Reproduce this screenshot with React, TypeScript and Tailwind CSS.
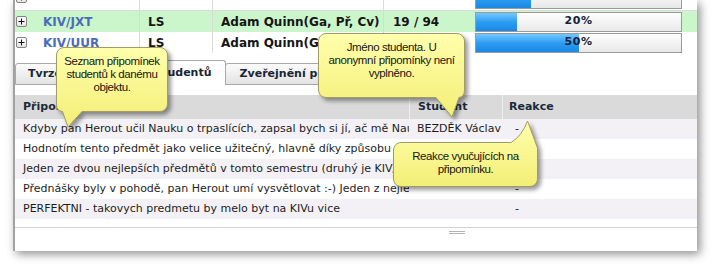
import React from "react";

function Expander({ className = "" }: { className?: string }) {
  return (
    <div
      className={
        "w-[11px] h-[11px] shrink-0 border border-[#858585] rounded-[2px] bg-linear-to-b from-white to-[#e4e4e4] flex items-center justify-center " +
        className
      }
    >
      <svg width="7" height="7" viewBox="0 0 7 7">
        <path d="M0.5 3.5H6.5M3.5 0.5V6.5" stroke="#111" strokeWidth="1" />
      </svg>
    </div>
  );
}

function Bar({ pct, label = true }: { pct: number; label?: boolean }) {
  return (
    <div className="relative w-[207px] h-[20px] border border-[#9a9a9a] bg-linear-to-b from-[#fefefe] to-[#e8e8e8]">
      <div
        className="absolute left-0 top-0 bottom-0 bg-linear-to-b from-[#72c8ff] via-[#2c9cf2] to-[#1a88e4]"
        style={{ width: `${pct}%` }}
      />
      {label && (
        <span className="relative flex h-full items-center justify-center text-[11px] font-bold tracking-[0.6px] text-[#142238]">
          {pct}%
        </span>
      )}
    </div>
  );
}

function TopRow({
  green,
  code,
  typ,
  name,
  count,
  pct,
}: {
  green?: boolean;
  code: string;
  typ: string;
  name: string;
  count: string;
  pct: number;
}) {
  return (
    <div className={"flex h-[21px] items-stretch " + (green ? "bg-[#cbf5cb]" : "bg-white")}>
      <div className="w-[124px] flex items-center pl-[1px]">
        <Expander />
        <span className="ml-[16px] text-[12px] font-bold text-[#4b6cb7]">{code}</span>
      </div>
      <div className="w-[73px] flex items-center border-l border-[#dadada] pl-[8px] text-[12px] font-bold text-[#161616]">
        {typ}
      </div>
      <div className="w-[171px] flex items-center border-l border-[#dadada] pl-[8px] text-[12px] font-bold text-[#161616] whitespace-nowrap">
        {name}
      </div>
      <div className="w-[87px] flex items-center border-l border-[#dadada] pl-[9px] text-[12px] font-bold text-[#161616] whitespace-nowrap">
        {count}
      </div>
      <div className="flex items-center pl-[5px]">
        <Bar pct={pct} />
      </div>
    </div>
  );
}

const rows = [
  {
    text: "Kdyby pan Herout učil Nauku o trpaslících, zapsal bych si jí, ač mě Nauka o trpaslících nezajímá.",
    student: "BEZDĚK Václav",
    reakce: "-",
  },
  {
    text: "Hodnotím tento předmět jako velice užitečný, hlavně díky způsobu výuky.",
    student: "",
    reakce: "-",
  },
  {
    text: "Jeden ze dvou nejlepších předmětů v tomto semestru (druhý je KIV/UUR).",
    student: "",
    reakce: "-",
  },
  {
    text: "Přednášky byly v pohodě, pan Herout umí vysvětlovat :-) Jeden z nejlepších předmětů.",
    student: "",
    reakce: "-",
  },
  {
    text: "PERFEKTNI - takovych predmetu by melo byt na KIVu vice",
    student: "",
    reakce: "-",
  },
];

function Callout({
  left,
  top,
  w,
  h,
  path,
  lines,
}: {
  left: number;
  top: number;
  w: number;
  h: number;
  path: string;
  lines: string[];
}) {
  const id = `g${left}`;
  return (
    <div className="absolute" style={{ left, top, width: w, height: h }}>
      <svg
        width={w}
        height={h}
        className="absolute left-0 top-0 overflow-visible drop-shadow-[3px_3px_2px_rgba(0,0,0,0.4)]"
      >
        <defs>
          <linearGradient id={id} x1="0" y1="0" x2="0" y2="1">
            <stop offset="0" stopColor="#ffffac" />
            <stop offset="1" stopColor="#f3ee76" />
          </linearGradient>
        </defs>
        <path d={path} fill={`url(#${id})`} stroke="#a09c68" strokeWidth="1" />
      </svg>
      <div className="relative pt-[8px] text-center text-[11.5px] leading-[13px] tracking-[-0.4px] text-[#161616] font-['Liberation_Sans',Arial,sans-serif]">
        {lines.map((l, i) => (
          <div key={i}>{l}</div>
        ))}
      </div>
    </div>
  );
}

export default function App() {
  return (
    <div className="relative w-[712px] h-[266px] overflow-hidden bg-white font-['DejaVu_Sans',Verdana,sans-serif]">
      <div className="ml-[13px] w-[684px] h-[251px] bg-white border-l-2 border-[#a2a2a2] shadow-[3px_3px_9px_rgba(0,0,0,0.45)] flex flex-col">
        {/* previous row remainder */}
        <div className="h-[11px] flex items-stretch overflow-hidden border-b border-[#dcdcdc]">
          <div className="w-[124px] pl-[1px]">
            <Expander className="-mt-[8px]" />
          </div>
          <div className="w-[73px] border-l border-[#dadada]" />
          <div className="w-[171px] border-l border-[#dadada]" />
          <div className="w-[87px] border-l border-[#dadada]" />
          <div className="flex items-end pl-[5px] pb-[1px]">
            <Bar pct={27} label={false} />
          </div>
        </div>
        <TopRow green code="KIV/JXT" typ="LS" name="Adam Quinn(Ga, Př, Cv)" count="19 / 94" pct={20} />
        <TopRow code="KIV/UUR" typ="LS" name="Adam Quinn(Ga, Př, Cv)" count="47 / 94" pct={50} />

        {/* tabs */}
        <div className="mt-[7px] h-[25px] flex items-end">
          <div className="h-[22px] flex items-center pl-[12px] pr-[3px] border border-[#a9a9a9] rounded-t-[3px] bg-linear-to-b from-[#fbfbfb] to-[#e3e3e3] text-[11px] font-bold text-[#1a2636]">
            Tvrzení
          </div>
          <div className="-ml-px h-[25px] flex items-center pl-[4px] pr-[13px] border border-b-0 border-[#a9a9a9] rounded-t-[3px] bg-white text-[11px] font-bold text-[#1a2636]">
            Připomínky studentů
          </div>
          <div className="-ml-px h-[22px] flex items-center pl-[14px] pr-[13px] border border-[#a9a9a9] rounded-t-[3px] bg-linear-to-b from-[#fbfbfb] to-[#e3e3e3] text-[11px] font-bold text-[#1a2636]">
            Zveřejnění připomínek
          </div>
        </div>

        {/* table header */}
        <div className="mt-[10px] h-[24px] flex items-stretch bg-[#dadada] text-[11px] font-bold text-[#1b2a3b]">
          <div className="w-[394px] flex items-center pl-[8px]">Připomínka</div>
          <div className="w-[93px] flex items-center border-l border-[#eeeeee] pl-[8px]">Student</div>
          <div className="flex-1 flex items-center border-l border-[#eeeeee] pl-[6px]">Reakce</div>
        </div>

        {rows.map((r, i) => (
          <div
            key={i}
            className={
              "h-[20px] flex items-stretch text-[11px] text-[#1e1e1e] " +
              (i % 2 === 0 ? "bg-[#f3f1f5]" : "bg-white")
            }
          >
            <div className="w-[394px] flex items-center pl-[8px] overflow-hidden whitespace-nowrap">{r.text}</div>
            <div className="w-[94px] flex items-center pl-[8px] overflow-hidden whitespace-nowrap">{r.student}</div>
            <div className="flex-1 flex items-center pl-[12px]">{r.reakce}</div>
          </div>
        ))}

        {/* footer with grip */}
        <div className="mt-[8px] border-t border-[#d2d2d2] flex-1">
          <div className="ml-[434px] mt-[3px] w-[16px] flex flex-col gap-[1px]">
            <div className="h-[1px] bg-[#b4b4b4]" />
            <div className="h-[1px] bg-[#b4b4b4]" />
          </div>
        </div>
      </div>

      <Callout
        left={56}
        top={47}
        w={112}
        h={65}
        path="M8,0.5 H104 A7.5,7.5 0 0 1 111.5,8 V57 A7.5,7.5 0 0 1 104,64.5 H26 L12,80 L6.5,64.5 Q0.5,64 0.5,58 V8 A7.5,7.5 0 0 1 8,0.5 Z"
        lines={["Seznam připomínek", "studentů k danému", "objektu."]}
      />
      <Callout
        left={318}
        top={33}
        w={147}
        h={65}
        path="M8,0.5 H139 A7.5,7.5 0 0 1 146.5,8 V57 Q146.5,64 141,64.5 L134,84 L118,64.5 H8 A7.5,7.5 0 0 1 0.5,57 V8 A7.5,7.5 0 0 1 8,0.5 Z"
        lines={["Jméno studenta. U", "anonymní připomínky není", "vyplněno."]}
      />
      <Callout
        left={393}
        top={142}
        w={145}
        h={45}
        path="M8,0.5 H118 Q129,-6 134.5,-21 L144.5,6 V37 A7.5,7.5 0 0 1 137,44.5 H8 A7.5,7.5 0 0 1 0.5,37 V8 A7.5,7.5 0 0 1 8,0.5 Z"
        lines={["Reakce vyučujících na", "připomínku."]}
      />
    </div>
  );
}
